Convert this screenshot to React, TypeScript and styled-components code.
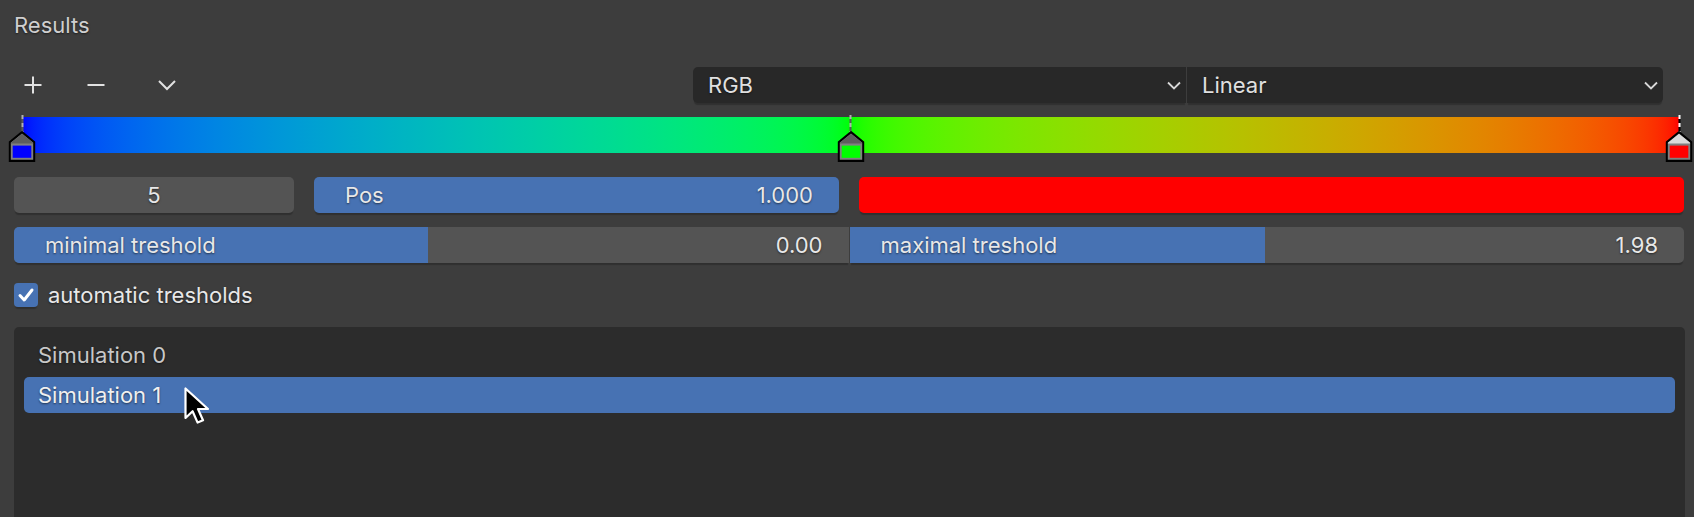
import React from 'react';
import styled, { createGlobalStyle, css } from 'styled-components';

const GlobalStyle = createGlobalStyle`
  html, body {
    margin: 0;
    padding: 0;
    background: #3d3d3d;
    overflow: hidden;
  }
  body {
    font-family: Inter, "Noto Sans", "DejaVu Sans", sans-serif;
    font-size: 22px;
    color: #e6e6e6;
  }
`;

const stops = [
  { pos: 0, color: '#0000ff', active: false },
  { pos: 50, color: '#00ff00', active: false },
  { pos: 100, color: '#ff0000', active: true },
];

const thresholds = [
  { label: 'minimal treshold', value: 0, shown: '0.00', fill: 49.6 },
  { label: 'maximal treshold', value: 1.98, shown: '1.98', fill: 49.8 },
];

const simulations = ['Simulation 0', 'Simulation 1'];

export default function App() {
  return (
    <>
      <GlobalStyle />
      <Page>
        <Header>Results</Header>

        <Toolbar>
          <IconGroup>
            <IconButton $offset={1}>
              <svg width="18" height="18" viewBox="0 0 18 18">
                <path d="M9 0.5V17.5M0.5 9H17.5" stroke="#e2e2e2" strokeWidth="2" fill="none" />
              </svg>
            </IconButton>
            <IconButton $offset={27}>
              <svg width="18" height="18" viewBox="0 0 18 18">
                <path d="M0.5 9H17.5" stroke="#e2e2e2" strokeWidth="2" fill="none" />
              </svg>
            </IconButton>
            <IconButton $offset={35}>
              <svg width="18" height="18" viewBox="0 0 18 18">
                <polyline points="1,5 9,13 17,5" stroke="#e2e2e2" strokeWidth="2" fill="none" />
              </svg>
            </IconButton>
          </IconGroup>

          <DropdownGroup>
            <Dropdown $side="left">
              <span>RGB</span>
              <SmallChevron />
            </Dropdown>
            <Dropdown $side="right">
              <span>Linear</span>
              <SmallChevron />
            </Dropdown>
          </DropdownGroup>
        </Toolbar>

        <RampWrap>
          <RampBar />
          {stops.map((s) => (
            <Stop key={s.pos} style={{ left: `${s.pos}%` }}>
              <StopLine $active={s.active} />
              <svg width="27" height="31" viewBox="0 0 27 31">
                <path d="M13.5 1.2L25.8 11.2V29.8H1.2V11.2Z" fill="#808080" stroke="#000" strokeWidth="2.2" strokeLinejoin="miter" />
                <path d="M13.5 2.8L24.6 11.8V12.6H2.4V11.8Z" fill={s.active ? '#dadada' : '#5e5e5e'} />
                <rect x="4.2" y="14.6" width="18.6" height="12.2" fill={s.color} />
              </svg>
            </Stop>
          ))}
        </RampWrap>

        <FieldRow>
          <Field $tone="gray" $center>
            <span>5</span>
          </Field>
          <Field $tone="blue">
            <span>Pos</span>
            <span>1.000</span>
          </Field>
          <Field $tone="color" />
        </FieldRow>

        <SliderRow>
          {thresholds.map((t, i) => (
            <Slider key={t.label} $side={i === 0 ? 'left' : 'right'}>
              <SliderFill style={{ width: `${t.fill}%` }} />
              <SliderText>
                <span>{t.label}</span>
                <span>{t.shown}</span>
              </SliderText>
            </Slider>
          ))}
        </SliderRow>

        <CheckRow>
          <CheckBox>
            <svg width="24" height="24" viewBox="0 0 24 24">
              <path d="M6 12.5L10.2 17L18 7" stroke="#fff" strokeWidth="3" fill="none" strokeLinecap="round" strokeLinejoin="round" />
            </svg>
          </CheckBox>
          <CheckLabel>automatic tresholds</CheckLabel>
        </CheckRow>

        <ListBox>
          {simulations.map((name, i) => (
            <ListItem key={name} $selected={i === 1}>
              {name}
            </ListItem>
          ))}
          <Cursor width="27" height="40" viewBox="0 0 27 40">
            <path
              d="M1.5 1.5V31L8.6 24.2L13.6 35.6L19 33.3L14 22H24Z"
              fill="#000"
              stroke="#fff"
              strokeWidth="2.2"
              strokeLinejoin="round"
            />
          </Cursor>
        </ListBox>
      </Page>
    </>
  );
}

function SmallChevron() {
  return (
    <svg width="14" height="9" viewBox="0 0 14 9">
      <polyline points="1,1.5 7,7.5 13,1.5" stroke="#d8d8d8" strokeWidth="1.8" fill="none" />
    </svg>
  );
}

const textShadow = css`
  text-shadow: 0 1px 2px rgba(0, 0, 0, 0.55);
`;

const widgetShadow = css`
  box-shadow: 0 3px 1px -1px rgba(0, 0, 0, 0.22);
`;

const Page = styled.div`
  display: flex;
  flex-direction: column;
  padding: 7px 10px 0 14px;
  height: 517px;
  box-sizing: border-box;
`;

const Header = styled.div`
  height: 36px;
  line-height: 36px;
  color: #cfcfcf;
  ${textShadow}
`;

const Toolbar = styled.div`
  display: flex;
  align-items: center;
  height: 36px;
  margin-top: 24px;
`;

const IconGroup = styled.div`
  display: flex;
  align-items: center;
  width: 679px;
  height: 100%;
`;

const IconButton = styled.div<{ $offset: number }>`
  display: flex;
  align-items: center;
  justify-content: center;
  width: 36px;
  height: 36px;
  margin-left: ${(p) => p.$offset}px;
`;

const DropdownGroup = styled.div`
  display: grid;
  grid-template-columns: 493px 476px;
  gap: 1px;
  height: 100%;
`;

const Dropdown = styled.div<{ $side: 'left' | 'right' }>`
  display: flex;
  align-items: center;
  justify-content: space-between;
  padding: 0 5px 0 15px;
  background: #282828;
  line-height: 36px;
  color: #e0e0e0;
  ${textShadow}
  ${widgetShadow}
  border-radius: ${(p) => (p.$side === 'left' ? '5px 0 0 5px' : '0 5px 5px 0')};
`;

const RampWrap = styled.div`
  position: relative;
  height: 36px;
  margin: 14px 5px 0 8px;
`;

const RampBar = styled.div`
  height: 100%;
  background: linear-gradient(to right, #0000ff, #00bcbc 25%, #00ff00 50%, #bcbc00 75%, #ff0000);
  background: linear-gradient(to right in srgb-linear, #0000ff, #00ff00 50%, #ff0000);
`;

const Stop = styled.div`
  position: absolute;
  top: -2px;
  width: 27px;
  display: flex;
  flex-direction: column;
  align-items: center;
  transform: translateX(-50%);
`;

const StopLine = styled.div<{ $active: boolean }>`
  width: 2px;
  height: 18px;
  margin-bottom: -2px;
  background: ${(p) =>
    p.$active
      ? 'repeating-linear-gradient(to bottom, #ffffff 0 4px, #000000 4px 8px)'
      : 'repeating-linear-gradient(to bottom, #b0b0b0 0 4px, #5a5a5a 4px 8px)'};
`;

const FieldRow = styled.div`
  display: grid;
  grid-template-columns: 280px 525px 1fr;
  gap: 20px;
  height: 36px;
  margin-top: 24px;
`;

const toneColors = {
  gray: '#545454',
  blue: '#4772b3',
  color: '#ff0000',
};

const Field = styled.div<{ $tone: keyof typeof toneColors; $center?: boolean }>`
  display: flex;
  align-items: center;
  justify-content: ${(p) => (p.$center ? 'center' : 'space-between')};
  padding: ${(p) => (p.$center ? '0' : '0 26px 0 31px')};
  background: ${(p) => toneColors[p.$tone]};
  border-radius: 5px;
  line-height: 36px;
  color: #e8e8e8;
  ${textShadow}
  ${widgetShadow}
`;

const SliderRow = styled.div`
  display: grid;
  grid-template-columns: 1fr 1fr;
  gap: 1px;
  height: 36px;
  margin-top: 14px;
`;

const Slider = styled.div<{ $side: 'left' | 'right' }>`
  position: relative;
  overflow: hidden;
  background: #545454;
  border-radius: ${(p) => (p.$side === 'left' ? '5px 0 0 5px' : '0 5px 5px 0')};
  ${widgetShadow}
`;

const SliderFill = styled.div`
  position: absolute;
  left: 0;
  top: 0;
  bottom: 0;
  background: #4772b3;
`;

const SliderText = styled.div`
  position: relative;
  display: flex;
  justify-content: space-between;
  padding: 0 26px 0 31px;
  line-height: 36px;
  color: #e8e8e8;
  ${textShadow}
`;

const CheckRow = styled.div`
  display: flex;
  align-items: center;
  gap: 10px;
  height: 24px;
  margin-top: 20px;
`;

const CheckBox = styled.div`
  width: 24px;
  height: 24px;
  border-radius: 4px;
  background: #4772b3;
  ${widgetShadow}
  svg {
    display: block;
  }
`;

const CheckLabel = styled.span`
  line-height: 24px;
  color: #e8e8e8;
  ${textShadow}
`;

const ListBox = styled.div`
  position: relative;
  flex: 1;
  margin-top: 20px;
  margin-right: -1px;
  padding: 10px 10px 0 10px;
  background: #2c2c2c;
  border-radius: 5px 5px 0 0;
  display: flex;
  flex-direction: column;
  gap: 4px;
`;

const ListItem = styled.div<{ $selected?: boolean }>`
  height: 36px;
  line-height: 36px;
  padding-left: 14px;
  border-radius: 5px;
  background: ${(p) => (p.$selected ? '#4772b3' : 'transparent')};
  color: ${(p) => (p.$selected ? '#f0f0f0' : '#c8c8c8')};
  ${textShadow}
`;

const Cursor = styled.svg`
  position: absolute;
  left: 170px;
  top: 60px;
`;
